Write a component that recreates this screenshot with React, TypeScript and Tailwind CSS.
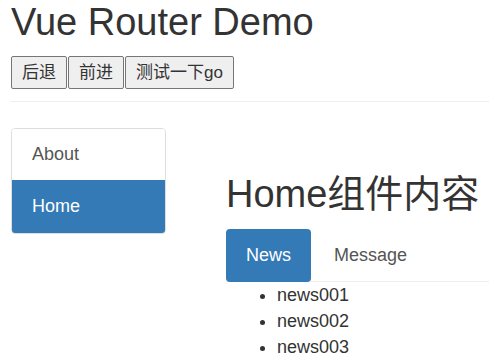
import React from 'react';

const FONT = { fontFamily: '"Liberation Sans", Arial, "Noto Sans CJK SC", sans-serif' };

function NavButton({ label }: { label: string }) {
    return (
        <button className="h-[33px] px-[10px] text-[17px] leading-none text-[#333] bg-[#efefef] border border-[#767676] rounded-[2px]">
            {label}
        </button>
    );
}

export default function App() {
    const news = ['news001', 'news002', 'news003'];

    return (
        <div className="pl-[11px] text-[#333] bg-white min-h-screen" style={FONT}>
            <h1 className="text-[38px] leading-[44px] font-normal">Vue Router Demo</h1>

            <div className="flex gap-[1px] mt-[12px]">
                <NavButton label="后退" />
                <NavButton label="前进" />
                <NavButton label="测试一下go" />
            </div>

            <hr className="mt-[12px] border-t border-[#eee]" />

            <div className="flex">
                {/* sidebar links */}
                <div className="w-[155px] mt-[26px] self-start flex flex-col text-[18px] border border-[#ddd] rounded-[4px] overflow-hidden">
                    <div className="h-[51px] flex items-center pl-[20px] bg-white text-[#555]">About</div>
                    <div className="h-[53px] flex items-center pl-[20px] bg-[#337ab7] text-white">Home</div>
                </div>

                <div className="ml-[60px] flex-1">
                    <h2 className="mt-[70px] text-[38px] leading-[44px] font-normal">Home组件内容</h2>

                    <div className="mt-[13px] flex items-stretch border-b border-[#eee] text-[18px]">
                        <div className="h-[53px] -mb-px flex items-center px-[20px] bg-[#337ab7] text-white rounded-[4px]">
                            News
                        </div>
                        <div className="ml-[3px] flex items-center px-[20px] text-[#555]">Message</div>
                    </div>

                    <ul className="list-disc pl-[51px] text-[18px] leading-[26px]">
                        {news.map((n) => (
                            <li key={n}>{n}</li>
                        ))}
                    </ul>
                </div>
            </div>
        </div>
    );
}
